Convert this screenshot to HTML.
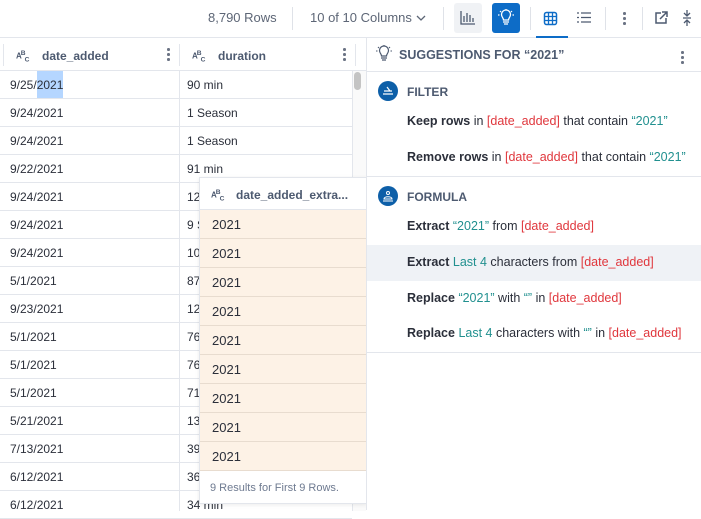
<!DOCTYPE html>
<html><head><style>
*{box-sizing:border-box;margin:0;padding:0}
body{width:701px;height:510px;overflow:hidden;background:#fff;font-family:"Liberation Sans",sans-serif;font-size:12px;color:#2b2f3a;position:relative}
.a{position:absolute}
.row{position:absolute;left:0;width:352px;height:28px;border-bottom:1px solid #e3e6ec}
.row span{position:absolute;top:7px}
.hd{font-weight:bold;color:#4d5a70;font-size:12px}
.pr{position:absolute;left:200px;width:166px;height:29px;background:#fdf2e6;border-bottom:1px solid #e8dccf;padding:7px 12px;font-size:13px}
.sg{position:absolute;left:407px;font-size:12.5px}
.b{font-weight:bold;color:#2b2f3a}.t{color:#21908f}.r{color:#e0373d}
.dots{position:absolute;width:3px}
.dots i{display:block;width:2.5px;height:2.5px;background:#6b7384;border-radius:50%;margin-bottom:2.5px}
.abc{position:absolute;font-size:8px;font-weight:bold;color:#4d5a70;letter-spacing:-1px}
</style></head><body>
<div class="a" style="left:0;top:37px;width:701px;height:1px;background:#e3e6ec"></div>
<div class="a" style="left:208px;top:10px;font-size:13px;color:#5d6676">8,790 Rows</div>
<div class="a" style="left:292px;top:7px;width:1px;height:23px;background:#dfe2e8"></div>
<div class="a" style="left:310px;top:10px;font-size:13px;color:#5d6676">10 of 10 Columns</div>
<svg class="a" style="left:416px;top:14px" width="10" height="8"><path d="M1 2l4 4 4-4" fill="none" stroke="#5d6676" stroke-width="1.3"/></svg>
<div class="a" style="left:443px;top:7px;width:1px;height:23px;background:#dfe2e8"></div>
<div class="a" style="left:454px;top:3px;width:28px;height:30px;background:#f0f2f5;border-radius:3px"></div>
<svg class="a" style="left:459px;top:9px" width="18" height="18"><path d="M2 2v13h14M5 13V7M8 13V4M11 13V6M14 13V9" fill="none" stroke="#4d5a70" stroke-width="1.3"/></svg>
<div class="a" style="left:492px;top:3px;width:28px;height:30px;background:#0d6cc7;border-radius:3px"></div>
<svg class="a" style="left:497px;top:9px" width="18" height="18"><path d="M6 13h6M7 15h4M6.5 11c0-2-2-3-2-5.5a4.5 4.5 0 019 0c0 2.5-2 3.5-2 5.5z" fill="none" stroke="#fff" stroke-width="1.3"/><path d="M1 6h1.5M15.5 6H17M3 2l1 1M15 2l-1 1M9 0v1" stroke="#fff" stroke-width="1.2"/></svg>
<div class="a" style="left:530px;top:7px;width:1px;height:23px;background:#dfe2e8"></div>
<svg class="a" style="left:543px;top:11px" width="16" height="16"><rect x="1.5" y="1.5" width="12" height="12" rx="2" fill="none" stroke="#0d6cc7" stroke-width="1.5"/><path d="M5.5 2v11M9.5 2v11M2 5.5h11M2 9.5h11" stroke="#0d6cc7" stroke-width="1.3"/></svg>
<div class="a" style="left:536px;top:36px;width:32px;height:2px;background:#0d6cc7"></div>
<svg class="a" style="left:576px;top:11px" width="16" height="14"><path d="M1 2h2M1 6.5h2M1 11h2M5 2h10M5 6.5h10M5 11h10" stroke="#4d5a70" stroke-width="1.3"/></svg>
<div class="a" style="left:605px;top:7px;width:1px;height:23px;background:#dfe2e8"></div>
<div class="dots" style="left:623px;top:12px"><i></i><i></i><i></i></div>
<div class="a" style="left:642px;top:7px;width:1px;height:23px;background:#dfe2e8"></div>
<svg class="a" style="left:653px;top:10px" width="16" height="16"><path d="M8 3H3v10h10V8M9 2h5v5M14 2L7 9" fill="none" stroke="#4d5a70" stroke-width="1.5"/></svg>
<svg class="a" style="left:681px;top:9px" width="12" height="18"><path d="M6 1v6M3 4l3 3 3-3M6 17v-6M3 14l3-3 3 3M2 9h8" fill="none" stroke="#4d5a70" stroke-width="1.3"/></svg>

<div class="a" style="left:0;top:38px;width:366px;height:33px;border-bottom:1px solid #e3e6ec"></div>
<div class="a" style="left:3px;top:44px;width:1px;height:22px;background:#e3e6ec"></div>
<div class="abc" style="left:16px;top:50px">A<sup>B</sup><sub>C</sub></div>
<div class="a hd" style="left:42px;top:49px">date_added</div>
<div class="dots" style="left:167px;top:48px"><i></i><i></i><i></i></div>
<div class="a" style="left:179px;top:44px;width:1px;height:22px;background:#e3e6ec"></div>
<div class="abc" style="left:192px;top:50px">A<sup>B</sup><sub>C</sub></div>
<div class="a hd" style="left:218px;top:49px">duration</div>
<div class="dots" style="left:343px;top:48px"><i></i><i></i><i></i></div>
<div class="a" style="left:355px;top:44px;width:1px;height:22px;background:#e3e6ec"></div>
<div class="a" style="left:179px;top:71px;width:1px;height:440px;background:#e3e6ec"></div>
<div class="a" style="left:352px;top:71px;width:14px;height:440px;background:#fafafa;border-left:1px solid #e3e6ec"></div>
<div class="a" style="left:354px;top:72px;width:7px;height:18px;background:#c4c4c4;border-radius:4px"></div>

<div class="row" style="top:71px"><span style="left:10px">9/25/<b style="font-weight:normal;background:#b5d6ff;padding:7px 0 6px">2021</b></span><span style="left:187px">90 min</span></div>
<div class="row" style="top:99px"><span style="left:10px">9/24/2021</span><span style="left:187px">1 Season</span></div>
<div class="row" style="top:127px"><span style="left:10px">9/24/2021</span><span style="left:187px">1 Season</span></div>
<div class="row" style="top:155px"><span style="left:10px">9/22/2021</span><span style="left:187px">91 min</span></div>
<div class="row" style="top:183px"><span style="left:10px">9/24/2021</span><span style="left:187px">12</span></div>
<div class="row" style="top:211px"><span style="left:10px">9/24/2021</span><span style="left:187px">9 S</span></div>
<div class="row" style="top:239px"><span style="left:10px">9/24/2021</span><span style="left:187px">10</span></div>
<div class="row" style="top:267px"><span style="left:10px">5/1/2021</span><span style="left:187px">87</span></div>
<div class="row" style="top:295px"><span style="left:10px">9/23/2021</span><span style="left:187px">12</span></div>
<div class="row" style="top:323px"><span style="left:10px">5/1/2021</span><span style="left:187px">76</span></div>
<div class="row" style="top:351px"><span style="left:10px">5/1/2021</span><span style="left:187px">76</span></div>
<div class="row" style="top:379px"><span style="left:10px">5/1/2021</span><span style="left:187px">71</span></div>
<div class="row" style="top:407px"><span style="left:10px">5/21/2021</span><span style="left:187px">13</span></div>
<div class="row" style="top:435px"><span style="left:10px">7/13/2021</span><span style="left:187px">39</span></div>
<div class="row" style="top:463px"><span style="left:10px">6/12/2021</span><span style="left:187px">36</span></div>
<div class="row" style="top:491px"><span style="left:10px">6/12/2021</span><span style="left:187px">34 min</span></div>

<div class="a" style="left:199px;top:177px;width:168px;height:327px;background:#fff;border:1px solid #e3e6ec;box-shadow:0 1px 4px rgba(0,0,0,.08)"></div>
<div class="a" style="left:200px;top:209px;width:166px;height:1px;background:#e3e6ec"></div>
<div class="abc" style="left:211px;top:189px">A<sup>B</sup><sub>C</sub></div>
<div class="a hd" style="left:236px;top:188px">date_added_extra...</div>
<div class="pr" style="top:210px">2021</div>
<div class="pr" style="top:239px">2021</div>
<div class="pr" style="top:268px">2021</div>
<div class="pr" style="top:297px">2021</div>
<div class="pr" style="top:326px">2021</div>
<div class="pr" style="top:355px">2021</div>
<div class="pr" style="top:384px">2021</div>
<div class="pr" style="top:413px">2021</div>
<div class="pr" style="top:442px">2021</div>
<div class="a" style="left:210px;top:482px;font-size:11px;color:#6e7a90">9 Results for First 9 Rows.</div>

<div class="a" style="left:366px;top:38px;width:335px;height:472px;border-left:1px solid #e3e6ec;background:#fff"></div>
<div class="a" style="left:367px;top:71px;width:334px;height:1px;background:#e3e6ec"></div>
<svg class="a" style="left:375px;top:45px" width="18" height="18"><path d="M6 13h6M7 15h4M6.5 11c0-2-2-3-2-5.5a4.5 4.5 0 019 0c0 2.5-2 3.5-2 5.5z" fill="none" stroke="#4d5a70" stroke-width="1.2"/><path d="M1 6h1.5M15.5 6H17M3 2l1 1M15 2l-1 1M9 0v1" stroke="#4d5a70" stroke-width="1.1"/></svg>
<div class="a hd" style="left:399px;top:48px;font-size:12.5px">SUGGESTIONS FOR “2021”</div>
<div class="dots" style="left:681px;top:51px"><i></i><i></i><i></i></div>
<div class="a" style="left:378px;top:81px;width:20px;height:20px;border-radius:50%;background:#0d5fa8"></div>
<svg class="a" style="left:381px;top:84px" width="14" height="14"><path d="M2 10h10M3 7h8M6 3l3 4" fill="none" stroke="#fff" stroke-width="1.2"/></svg>
<div class="a hd" style="left:407px;top:85px">FILTER</div>
<div class="sg" style="top:114px"><span class="b">Keep rows</span> in <span class="r">[date_added]</span> that contain <span class="t">“2021”</span></div>
<div class="sg" style="top:150px"><span class="b">Remove rows</span> in <span class="r">[date_added]</span> that contain <span class="t">“2021”</span></div>
<div class="a" style="left:367px;top:176px;width:334px;height:1px;background:#e3e6ec"></div>
<div class="a" style="left:378px;top:186px;width:20px;height:20px;border-radius:50%;background:#0d5fa8"></div>
<svg class="a" style="left:381px;top:189px" width="14" height="14"><circle cx="7" cy="4" r="1.5" fill="none" stroke="#fff"/><path d="M3 10c0-3 8-3 8 0zM2 12h10" fill="none" stroke="#fff" stroke-width="1.1"/></svg>
<div class="a hd" style="left:407px;top:190px">FORMULA</div>
<div class="sg" style="top:219px"><span class="b">Extract</span> <span class="t">“2021”</span> from <span class="r">[date_added]</span></div>
<div class="a" style="left:367px;top:245px;width:334px;height:36px;background:#eff2f6"></div>
<div class="sg" style="top:255px"><span class="b">Extract</span> <span class="t">Last 4</span> characters from <span class="r">[date_added]</span></div>
<div class="sg" style="top:291px"><span class="b">Replace</span> <span class="t">“2021”</span> with <span class="t">“”</span> in <span class="r">[date_added]</span></div>
<div class="sg" style="top:326px"><span class="b">Replace</span> <span class="t">Last 4</span> characters with <span class="t">“”</span> in <span class="r">[date_added]</span></div>
<div class="a" style="left:367px;top:352px;width:334px;height:1px;background:#e3e6ec"></div>
</body></html>
